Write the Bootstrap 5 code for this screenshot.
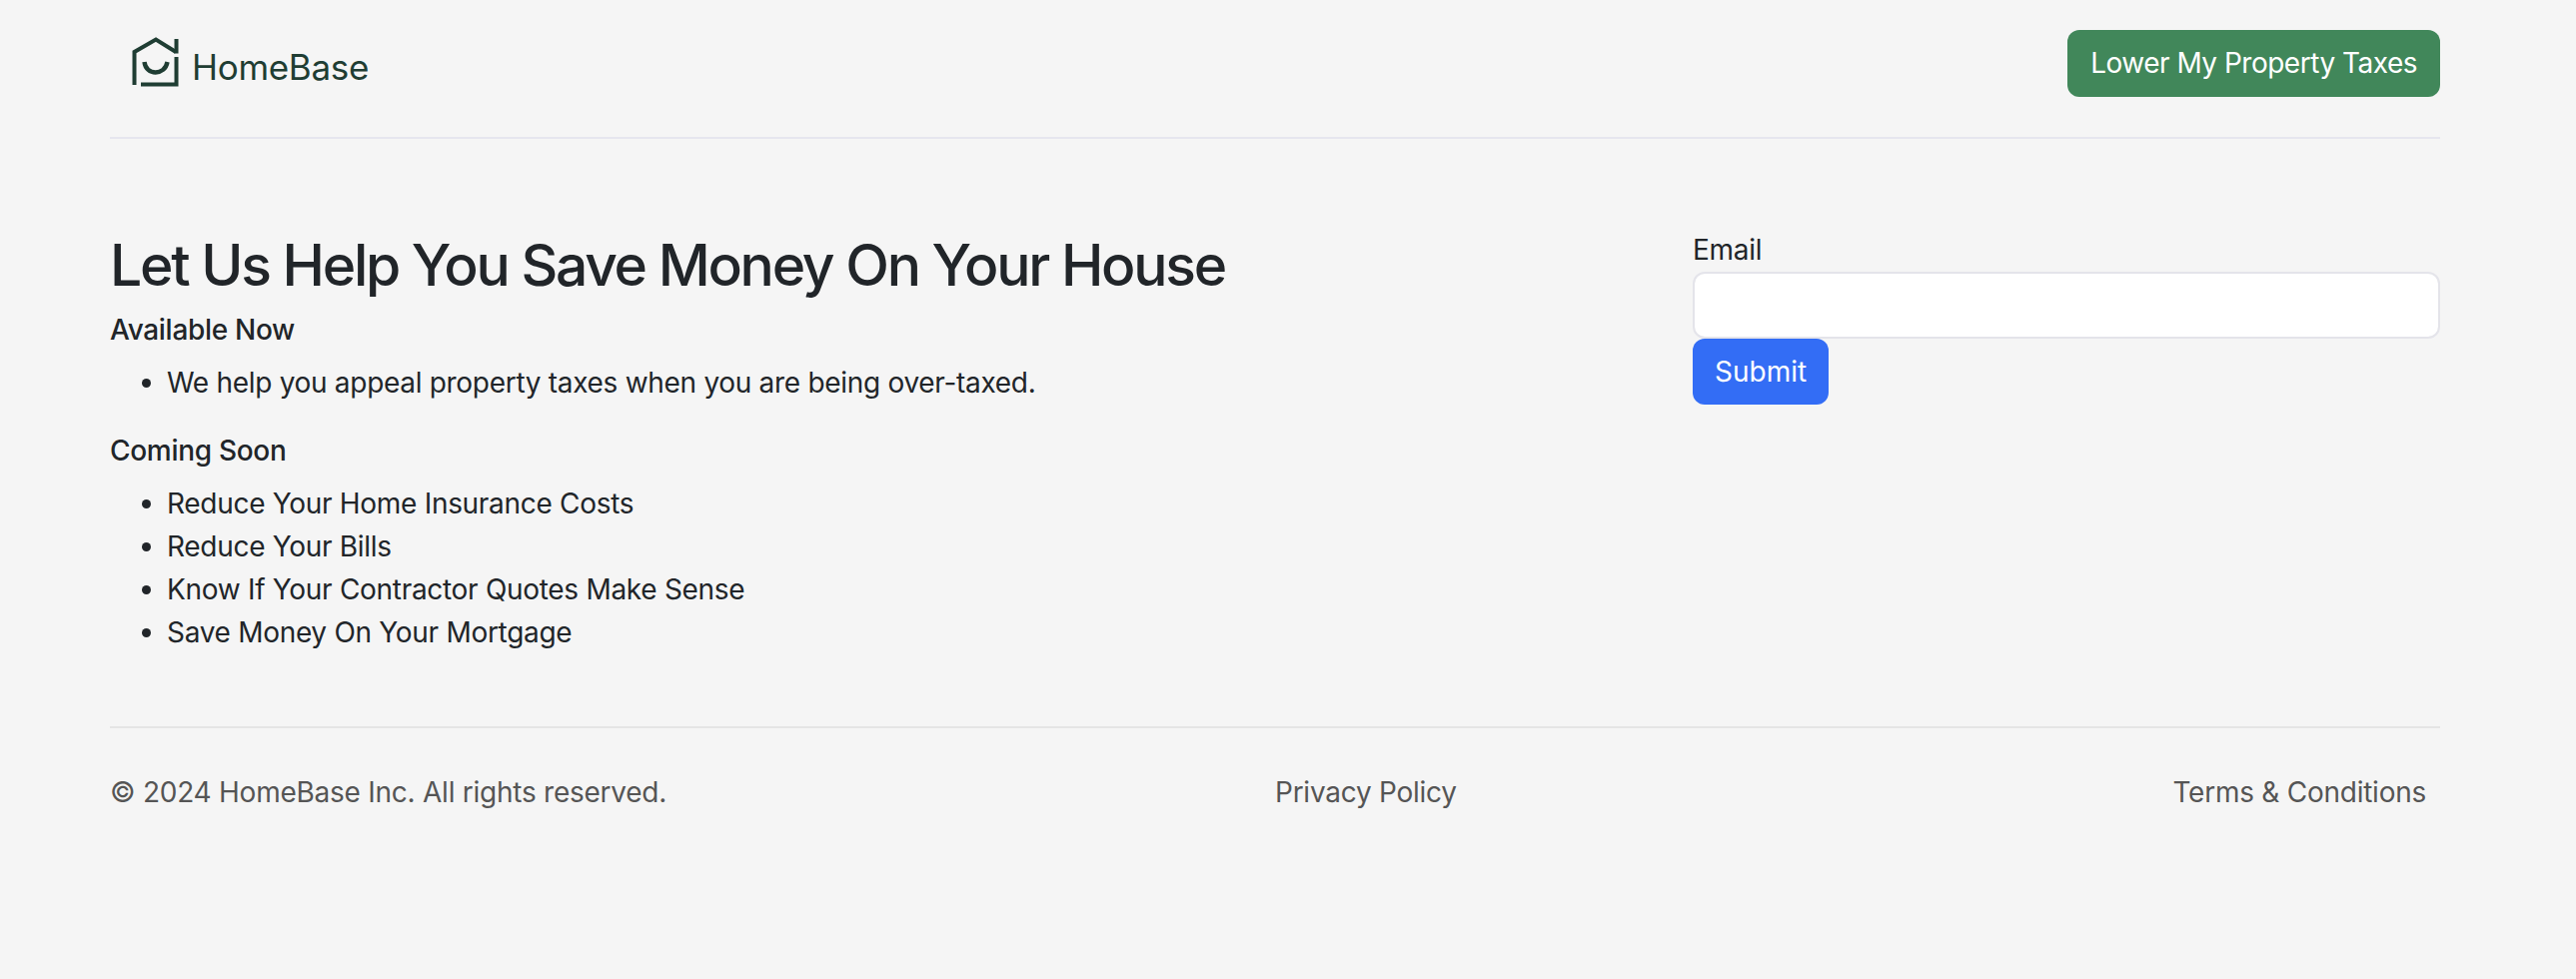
<!DOCTYPE html>
<html lang="en">
<head>
    <meta charset="UTF-8">
    <meta name="viewport" content="width=device-width, initial-scale=1">
    <title>HomeBase</title>
    <link href="https://cdn.jsdelivr.net/npm/bootstrap@5.3.0/dist/css/bootstrap.min.css" rel="stylesheet">
    <style>
        body {
            background: #f5f5f5;
            font-family: "Inter", "Liberation Sans", sans-serif;
            font-size: 28px;
            line-height: 1.5;
            letter-spacing: -0.3px;
            color: #212529;
        }
        .page-wrap {
            width: 2332px;
            margin-left: 110px;
        }
        .top-bar {
            height: 139px;
            padding-top: 30px;
            border-bottom: 2px solid #e6e6ee;
        }
        .brand-link {
            margin-left: 22px;
            margin-top: 3px;
            gap: 12px;
            color: #1f3d33;
            font-size: 35px;
            line-height: 48px;
            text-decoration: none;
        }
        .brand-link span {
            padding-top: 10px;
        }
        .btn-taxes {
            background: #41875a;
            border: 0;
            color: #fff;
            font-size: 28px;
            letter-spacing: -0.5px;
            line-height: 67px;
            padding: 0 23px;
            border-radius: 12px;
        }
        .hero-row {
            --bs-gutter-x: 44px;
            padding-top: 90px;
        }
        .hero-title {
            font-size: 57px;
            font-weight: 500;
            letter-spacing: -2.27px;
            line-height: 1.2;
            padding-top: 3px;
            margin-bottom: 9px;
        }
        .group-title {
            font-size: 28px;
            font-weight: 500;
            letter-spacing: -0.3px;
            line-height: 42px;
            margin-bottom: 11px;
        }
        .perk-list {
            padding-left: 57px;
            margin-bottom: 24px;
            line-height: 43.2px;
        }
        .email-label {
            line-height: 43px;
            margin-bottom: 0;
        }
        .email-input {
            height: 67px;
            border-radius: 12px;
            border: 2px solid #e4e4ea;
        }
        .btn-send {
            background: #336df5;
            border: 0;
            color: #fff;
            font-size: 28px;
            letter-spacing: 0;
            line-height: 66px;
            padding: 0 22px;
            border-radius: 12px;
        }
        .foot-bar {
            margin-top: 48px;
            padding: 43px 14px 0 0;
            border-top: 2px solid #e5e5e5;
            color: #555;
            letter-spacing: -0.25px;
        }
        .foot-bar a {
            color: #555;
            text-decoration: none;
        }
        .foot-left {
            flex: 0 0 calc(50% + 7px);
        }
    </style>
</head>
<body>
<div class="page-wrap">
    <header class="top-bar d-flex justify-content-between align-items-start">
        <a class="brand-link d-flex align-items-center" href="#">
            <svg width="48" height="50" viewBox="0 0 48 50" fill="none" stroke="#1f3d33" stroke-width="4" aria-hidden="true">
                <path d="M2.5 48V15L24 2.5L44 15"/>
                <path d="M44.5 2V16.5M44.5 20V47.5H9"/>
                <path d="M12.5 25C14 39 33 39 35.5 25" stroke-width="4.4"/>
            </svg>
            <span>HomeBase</span>
        </a>
        <button class="btn btn-taxes" type="button">Lower My Property Taxes</button>
    </header>
    <main class="row hero-row">
        <div class="col-8">
            <h1 class="hero-title">Let Us Help You Save Money On Your House</h1>
            <h2 class="group-title">Available Now</h2>
            <ul class="perk-list">
                <li>We help you appeal property taxes when you are being over-taxed.</li>
            </ul>
            <h2 class="group-title">Coming Soon</h2>
            <ul class="perk-list">
                <li>Reduce Your Home Insurance Costs</li>
                <li>Reduce Your Bills</li>
                <li>Know If Your Contractor Quotes Make Sense</li>
                <li>Save Money On Your Mortgage</li>
            </ul>
        </div>
        <div class="col-4">
            <form>
                <label class="form-label email-label" for="email">Email</label>
                <input class="form-control email-input" type="email" id="email">
                <button class="btn btn-send" type="submit">Submit</button>
            </form>
        </div>
    </main>
    <footer class="foot-bar d-flex">
        <span class="foot-left">© 2024 HomeBase Inc. All rights reserved.</span>
        <a href="#">Privacy Policy</a>
        <a class="ms-auto" href="#">Terms &amp; Conditions</a>
    </footer>
</div>
<script src="https://cdn.jsdelivr.net/npm/bootstrap@5.3.0/dist/js/bootstrap.bundle.min.js"></script>
</body>
</html>
